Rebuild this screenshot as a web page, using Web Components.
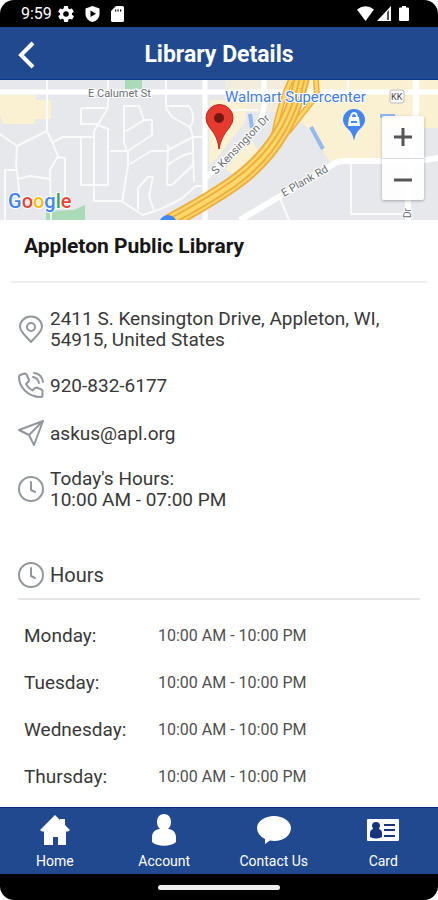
<!DOCTYPE html>
<html lang="en">
<head>
<meta charset="utf-8">
<meta name="viewport" content="width=device-width, initial-scale=1">
<title>Library Details</title>
<style>
  html { background: #fff; }
  body { margin: 0; font-family: Roboto, "Liberation Sans", sans-serif; color: #383838; }
</style>
</head>
<body>
<library-app></library-app>

<script>
const define = (name, html) => {
  const template = document.createElement('template');
  template.innerHTML = html;
  customElements.define(name, class extends HTMLElement {
    constructor() {
      super();
      this.attachShadow({ mode: 'open' }).append(template.content.cloneNode(true));
    }
  });
};

define('status-bar', `
<style>
  :host { display: flex; align-items: center; justify-content: space-between; height: 27px; padding: 0 29px 0 21px; background: #000; color: #fff; border-radius: 14px 14px 0 0; font-size: 16px; }
  div { display: flex; align-items: center; }
  .left { gap: 6px; }
  .left svg + svg { margin-left: 5px; }
  .right { gap: 3px; }
  .right svg:last-child { margin-left: 5px; }
  svg { fill: #fff; display: block; }
</style>
<div class="left">
  <span>9:59</span>
  <svg width="16" height="16" viewBox="2 2 20 20"><path d="M19.4 13a7.500 7.500 0 0 0 0-2l2.100-1.600a.5.5 0 0 0 .1-.6l-2-3.500a.5.5 0 0 0-.6-.2l-2.500 1a7 7 0 0 0-1.700-1L14.500 2.500a.5.5 0 0 0-.5-.5h-4a.5.5 0 0 0-.5.400l-.4 2.700a7 7 0 0 0-1.700 1l-2.500-1a.5.5 0 0 0-.6.2l-2 3.500a.5.5 0 0 0 .1.600L4.600 11a7.500 7.500 0 0 0 0 2l-2.100 1.600a.5.5 0 0 0-.1.600l2 3.500c.1.200.4.300.6.200l2.500-1a7 7 0 0 0 1.700 1l.4 2.700c0 .2.200.4.500.4h4c.2 0 .5-.2.5-.4l.4-2.700a7 7 0 0 0 1.700-1l2.500 1c.2.100.5 0 .6-.2l2-3.500a.5.500 0 0 0-.1-.6zM12 15.500a3.500 3.500 0 1 1 0-7 3.500 3.500 0 0 1 0 7z" fill-rule="evenodd"/></svg>
  <svg width="15" height="16" viewBox="0 0 15 16"><path fill-rule="evenodd" d="M7.500 0 14.500 2.500V8c0 4-3 7-7 8-4-1-7-4-7-8V2.500zM5.500 4.500v6.500l5.500-3.200z"/></svg>
  <svg width="13" height="16" viewBox="0 0 13 16"><path fill-rule="evenodd" d="M5 0h6.500Q13 0 13 1.500v13q0 1.500-1.500 1.500h-10Q0 16 0 14.500V5zM4 3.500v2h1.200v-2zM6.500 3.500v2h1.200v-2zM9 3.500v2h1.200v-2z"/></svg>
</div>
<div class="right">
  <svg width="17" height="15" viewBox="0 0 17 15"><path d="M0 3.500Q8.500-3 17 3.500L8.500 15z"/></svg>
  <svg width="14" height="15" viewBox="0 0 14 15"><path d="M14 0v15H0z"/><path fill="#555" d="M10 6v8h2V4z"/></svg>
  <svg width="10" height="15" viewBox="0 0 10 15"><path d="M3 0h4v1.500h2q1 0 1 1V14q0 1-1 1H1q-1 0-1-1V2.500q0-1 1-1h2z"/></svg>
</div>`);

define('app-header', `
<style>
  :host { display: grid; grid-template-columns: 52px 1fr 52px; align-items: center; height: 53px; padding-top: 3px; background: #20498f; border-bottom: 1px solid #0a3a8a; box-sizing: border-box; color: #fff; }
  button { width: 52px; height: 48px; padding: 0; border: 0; background: none; color: inherit; display: grid; place-items: center; }
  h1 { margin: 0; text-align: center; font-size: 23px; line-height: 28px; font-weight: 700; white-space: nowrap; }
</style>
<button aria-label="Back"><svg width="18" height="28" viewBox="0 0 18 28" fill="none" stroke="#fff" stroke-width="4"><path d="M16 2 4 14l12 12"/></svg></button>
<h1><slot></slot></h1>`);

define('map-view', `
<style>
  :host { display: block; position: relative; height: 140px; overflow: hidden; background: #e8eaed; }
  .map { display: block; width: 100%; height: 100%; }
  .zoom { position: absolute; right: 14px; top: 36px; width: 42px; background: rgba(255,255,255,.9); box-shadow: 0 1px 3px rgba(0,0,0,.3); border-radius: 2px; }
  button { display: grid; place-items: center; width: 100%; height: 42px; padding: 0; border: 0; background: none; }
  button + button { border-top: 1px solid #ddd; }
  text { font-family: Roboto, "Liberation Sans", sans-serif; }
</style>
<svg class="map" viewBox="0 0 438 140" preserveAspectRatio="xMidYMid slice" role="img" aria-label="Map">
  <path fill="#e6e8eb" d="M0 0h438v140H0z"/>
  <g fill="#faf0d2">
    <path d="M0 15h36v5h15v19H35v5H3L0 35zM210 20h38l-3 22-29 37-7 6zM308 0h130v48h-56v34h-52l-18-30-17-15zM243 66l9-6 7 14-22 22-12-6z"/>
    <path d="M225 0h83v32h-83z" opacity=".6"/>
  </g>
  <g fill="#a9dbb6"><path d="M125 0h17v9h-17zM46 131l28-1 11-5v15H46z"/></g>
  <g fill="none" stroke="#fafafa" stroke-width="2" stroke-linejoin="round">
    <path d="M47 0v51l6 13 5 12-8 14 1 50M47 51 17 66 0 54M17 66l-1 19 2 14 2 24M18 99l12-3 20 3M5 140V90h11M53 62l10-5h31M58 77l7 1v44M81 57v48h27V49L98 45M81 28h27M81 28v16h16M108 0v28l-14 23v70h27l22 14 18-6 20-10 15-13h6M125 26h14l5 14-16 10-4 1M144 40h8v15l-24 16v14l-6 38M124 25v37l4 12M110 71h18M130 84l21-13h15l27-14h13M166 0v28l6 9 18 10 3 10v15l1 30M165 26h24q6 8 3 18l-3 4M168 65l-1 40h5l21-20M168 85q15-12 25-12M138 130v-22l10-11h5l-4 19 5 15"/>
    <path d="M351 82v52h53M279 116l10 24M348 0v14M218 30h40"/>
  </g>
  <g fill="none" stroke="#fff">
    <path stroke-width="5" d="M0 12h438M205 0v140"/>
    <path stroke-width="6" d="M416 0v30l-8 85v25M240 140l92-55q5-4 12-4h75l19-3"/>
    <path stroke-width="5" d="M264 0v28q-5 22-22 34l-27 27-11 11"/>
  </g>
  <g fill="none">
    <path stroke="#efae3d" stroke-width="6" d="M291 0q-11 23-17 55M316 0l1 15-29 37"/>
    <path stroke="#fcd76c" stroke-width="3" d="M291 0q-11 23-17 55M316 0l1 15-29 37"/>
    <path stroke="#efae3d" stroke-width="16" d="M302-3C294 36 275 74 234 103Q210 120 169 142"/>
    <path stroke="#fcd76c" stroke-width="12" d="M302-3C294 36 275 74 234 103Q210 120 169 142"/>
    <path stroke="#efae3d" stroke-width="2" d="M300-3C292 36 273 73 232 101Q208 118 167 140M305-3C297 36 278 75 237 105Q213 122 172 144"/>
  </g>
  <g stroke="#94b8f0" stroke-width="4" fill="none"><path d="m311 47 12 22M380 36h15M250 34l2 14"/></g>
  <circle cx="168" cy="144" r="9" fill="#4285f4"/>
  <path fill="#4285f4" d="M354 61q-1-8-7-13-4-4-4-8a11 11 0 0 1 22 0q0 4-4 8-6 5-7 13z"/>
  <path fill="#fff" d="M349 37h10l1 9h-12z"/><path d="M351 38q0-5 3-5t3 5" fill="none" stroke="#fff" stroke-width="2"/><path d="M351 42h6" stroke="#4285f4" stroke-width="2"/>
  <path fill="#e63a2e" stroke="#b9281f" stroke-width="1" d="M219 69q-1-12-9-21-4-5-4-10a13 13 0 0 1 27 0q0 5-4 10-8 9-10 21z"/>
  <circle cx="219" cy="38" r="5" fill="#711811"/>
  <g fill="#6b6f74" font-size="11" stroke="#fff" stroke-width="2" paint-order="stroke">
    <text x="88" y="17">E Calumet St</text>
    <text transform="translate(216 95) rotate(-46)">S Kensington Dr</text>
    <text transform="translate(284 117) rotate(-30)">E Plank Rd</text>
    <text transform="translate(411 138) rotate(-90)" font-size="10">Dr</text>
  </g>
  <rect x="390" y="10" width="14" height="13" rx="2" fill="#fff" stroke="#bbb"/>
  <text x="391" y="20" font-size="9" fill="#444">KK</text>
  <text x="225" y="22" font-size="15" fill="#3f7de0" stroke="#fff" stroke-width="2" paint-order="stroke">Walmart Supercenter</text>
  <text x="8" y="128" font-size="20" font-weight="500" stroke="#fff" stroke-width="2" paint-order="stroke"><tspan fill="#4285f4">G</tspan><tspan fill="#ea4335">o</tspan><tspan fill="#fbbc05">o</tspan><tspan fill="#4285f4">g</tspan><tspan fill="#34a853">l</tspan><tspan fill="#ea4335">e</tspan></text>
</svg>
<div class="zoom">
  <button aria-label="Zoom in"><svg width="18" height="18" viewBox="0 0 18 18" stroke="#555" stroke-width="3"><path d="M0 9h18M9 0v18"/></svg></button>
  <button aria-label="Zoom out"><svg width="18" height="18" viewBox="0 0 18 18" stroke="#555" stroke-width="3"><path d="M0 9h18"/></svg></button>
</div>`);

define('info-row', `
<style>
  :host { display: grid; grid-template-columns: 26px 1fr; column-gap: 6px; align-items: center; font-size: 19px; line-height: 21px; min-height: 26px; }
  ::slotted(svg) { display: block; fill: none; stroke: #92979d; stroke-width: 2; stroke-linecap: round; stroke-linejoin: round; }
</style>
<slot name="icon"></slot><div><slot></slot></div>`);

define('hours-table', `
<style>
  :host { display: block; }
  table { border-collapse: collapse; width: 100%; }
  th, td { height: 47px; padding: 0; text-align: left; font-weight: 400; vertical-align: middle; }
  th { width: 134px; font-size: 19px; }
  td { font-size: 16px; color: #505050; }
</style>
<table>
  <tbody>
    <tr><th scope="row">Monday:</th><td>10:00 AM - 10:00 PM</td></tr>
    <tr><th scope="row">Tuesday:</th><td>10:00 AM - 10:00 PM</td></tr>
    <tr><th scope="row">Wednesday:</th><td>10:00 AM - 10:00 PM</td></tr>
    <tr><th scope="row">Thursday:</th><td>10:00 AM - 10:00 PM</td></tr>
  </tbody>
</table>`);

define('nav-item', `
<style>
  :host { display: block; flex: 1; }
  a { display: grid; justify-items: center; grid-template-rows: 34px 16px; row-gap: 6px; padding-top: 5px; color: #fff; text-decoration: none; font-size: 14px; line-height: 16px; font-weight: 400; }
  ::slotted(svg) { display: block; align-self: center; fill: #fff; }
</style>
<a href="#"><slot name="icon"></slot><span><slot></slot></span></a>`);

define('bottom-nav', `
<style>:host { display: flex; height: 67px; background: #20498f; border-top: 1px solid #0b2b82; box-sizing: border-box; }</style>
<slot></slot>`);

define('gesture-bar', `
<style>
  :host { display: grid; place-items: center; height: 26px; background: #000; border-radius: 0 0 14px 14px; }
  div { width: 28%; height: 5px; border-radius: 3px; background: #eee; }
</style><div></div>`);

define('library-app', `
<style>
  :host { display: flex; flex-direction: column; min-height: 100vh; }
  main { flex: 1; }
  h2 { margin: 0 11px; padding: 14px 13px 22px; font-size: 21px; line-height: 25px; font-weight: 700; color: #161616; border-bottom: 2px solid #eee; }
  .info { display: grid; gap: 22px; padding: 25px 18px 0; }
  .hours { margin: 52px 18px 0; padding-bottom: 10px; border-bottom: 2px solid #e6e6e6; }
  .hours h3 { margin: 0; font-size: 20px; line-height: 26px; font-weight: 400; }
  hours-table { margin: 12px 24px 0; }
</style>
<status-bar></status-bar>
<app-header>Library Details</app-header>
<main>
  <map-view></map-view>
  <h2>Appleton Public Library</h2>
  <div class="info">
    <info-row><svg slot="icon" width="26" height="28" viewBox="0 0 26 28"><path d="M13 27C8 21 2 17 2 11.500a11 10 0 0 1 22 0C24 17 18 21 13 27z"/><circle cx="13" cy="12" r="4"/></svg>2411 S. Kensington Drive, Appleton, WI,<br>54915, United States</info-row>
    <info-row><svg slot="icon" width="26" height="26" viewBox="0 0 26 26"><path d="M2 3 7 1.500q1 0 1.500 1L11 8q0 1-.5 1.500L8 12q2 4 6.500 6.500l2.500-2.500q1-.5 1.500-.5l5 2q1 .5 1 1.500v4q0 2-2 2C10 25 1 15 1 5q0-1 1-2zM15 5q5 1 6 6M16 1q8 1 9 9"/></svg>920-832-6177</info-row>
    <info-row><svg slot="icon" width="26" height="26" viewBox="0 0 26 26"><path d="M25 1 1 10l10 5 5 10zM25 1 11 15"/></svg>askus@apl.org</info-row>
    <info-row><svg slot="icon" width="26" height="26" viewBox="0 0 26 26"><circle cx="13" cy="13" r="12"/><path d="M13 6v8l4 2"/></svg>Today's Hours:<br>10:00 AM - 07:00 PM</info-row>
  </div>
  <div class="hours">
    <info-row><svg slot="icon" width="26" height="26" viewBox="0 0 26 26"><circle cx="13" cy="13" r="12"/><path d="M13 6v8l4 2"/></svg><h3>Hours</h3></info-row>
  </div>
  <hours-table></hours-table>
</main>
<bottom-nav>
  <nav-item><svg slot="icon" width="30" height="30" viewBox="0 0 30 30"><path d="M15 0 20 5V4h5v6l5 5-2 1.500h-2V30h-8v-8h-5v8H4V16.500H2L0 15z"/></svg>Home</nav-item>
  <nav-item><svg slot="icon" width="26" height="32" viewBox="0 0 26 32"><path d="M13 0c5 0 7 4 7 8 0 3-1 5-3 7 5 0 8 4 8 8v5c-5 5-19 5-24 0v-5c0-4 3-8 8-8-2-2-3-4-3-7 0-4 2-8 7-8z"/></svg>Account</nav-item>
  <nav-item><svg slot="icon" width="34" height="28" viewBox="0 0 34 28"><path d="M17 0c9 0 17 5 17 12s-7 13-17 13l-4-.5L8 28v-5Q0 19 0 12C0 5 8 0 17 0z"/></svg>Contact Us</nav-item>
  <nav-item><svg slot="icon" width="32" height="22" viewBox="0 0 32 22"><path d="M1 0h30q1 0 1 1v20q0 1-1 1H1q-1 0-1-1V1q0-1 1-1z"/><path fill="#17357d" d="M9 3c3 0 4 2 4 4l-1 3q3 1 3 4v4q-6 3-12 0v-4q0-3 3-4L5 7c0-2 1-4 4-4zM17 5h11v2H17zM17 10h11v2H17zM17 16h11v2H17z"/></svg>Card</nav-item>
</bottom-nav>
<gesture-bar></gesture-bar>`);
</script>
</body>
</html>
